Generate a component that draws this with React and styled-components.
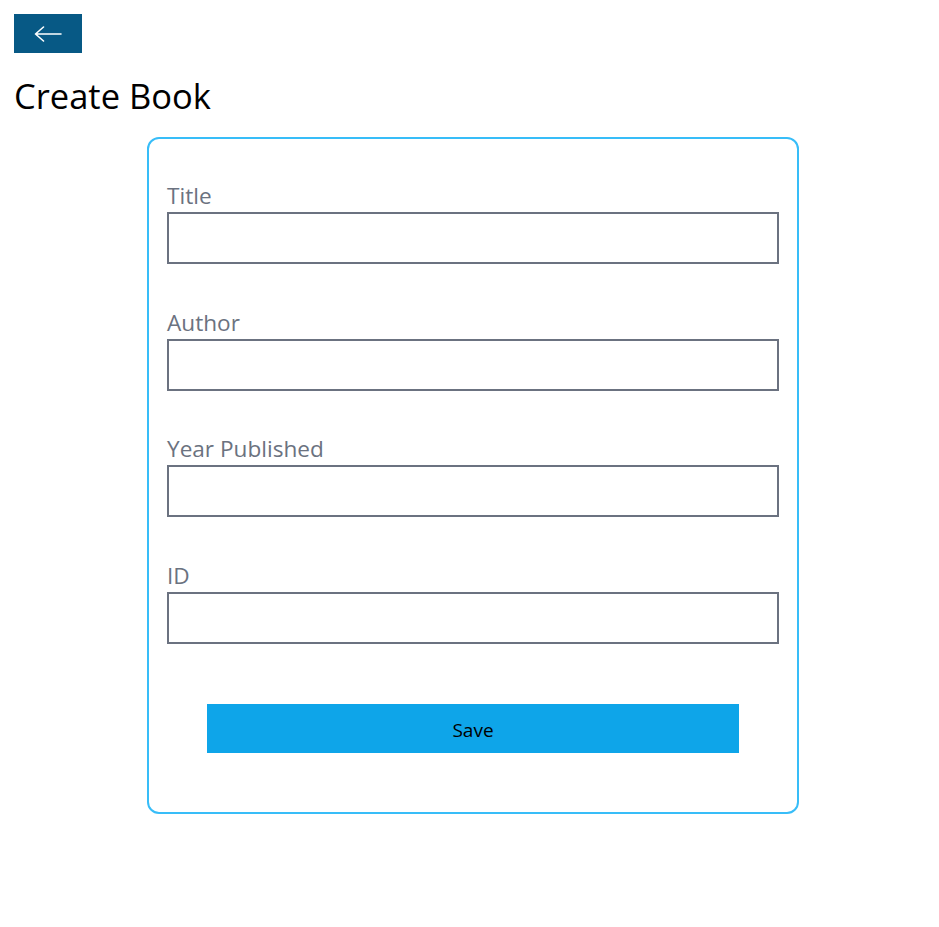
import React from "react";
import styled, { createGlobalStyle } from "styled-components";

const GlobalStyle = createGlobalStyle`
    * {
        box-sizing: border-box;
    }
    body {
        margin: 0;
        background: #ffffff;
        font-family: "Open Sans", "Noto Sans", sans-serif;
    }
`;

const Page = styled.div`
    padding: 14px;
    display: flex;
    flex-direction: column;
    align-items: flex-start;
`;

const BackButton = styled.button`
    width: 68px;
    height: 39px;
    padding: 0;
    border: none;
    background-color: #075985;
    display: flex;
    align-items: center;
    justify-content: center;
    cursor: pointer;
`;

const Heading = styled.h1`
    margin: 23px 0 21px 0;
    font-size: 34.5px;
    line-height: 40px;
    font-weight: 400;
    color: #000000;
`;

const Card = styled.form`
    width: 652px;
    margin-left: 133px;
    padding: 42px 18px 59px 18px;
    border: 2px solid #38bdf8;
    border-radius: 12px;
    display: flex;
    flex-direction: column;
    gap: 43.7px;
`;

const Field = styled.div`
    display: flex;
    flex-direction: column;
    gap: 1px;
`;

const Label = styled.label`
    font-size: 22.6px;
    line-height: 30px;
    color: #6b7280;
`;

const Input = styled.input`
    width: 100%;
    height: 52px;
    border: 2px solid #6b7280;
    padding: 0 12px;
    font-size: 20px;
    font-family: inherit;
    outline: none;
`;

const SaveButton = styled.button`
    align-self: center;
    width: 532px;
    height: 49px;
    margin-top: 16px;
    padding: 4px 0 0 0;
    border: none;
    background-color: #0ea5e9;
    color: #000000;
    font-family: inherit;
    font-size: 19px;
    cursor: pointer;
`;

const fields = ["Title", "Author", "Year Published", "ID"];

function ArrowLeft() {
    return (
        <svg width="28" height="16" viewBox="0 0 28 16" fill="none">
            <path d="M1.5 8H27M9.5 1L1.5 8L9.5 15" stroke="#ffffff" strokeWidth="1.6" strokeLinecap="round" strokeLinejoin="round" />
        </svg>
    );
}

export default function App() {
    return (
        <>
            <GlobalStyle />
            <Page>
                <BackButton aria-label="Back">
                    <ArrowLeft />
                </BackButton>
                <Heading>Create Book</Heading>
                <Card onSubmit={e => e.preventDefault()}>
                    {fields.map(name => (
                        <Field key={name}>
                            <Label>{name}</Label>
                            <Input type="text" />
                        </Field>
                    ))}
                    <SaveButton type="submit">Save</SaveButton>
                </Card>
            </Page>
        </>
    );
}
